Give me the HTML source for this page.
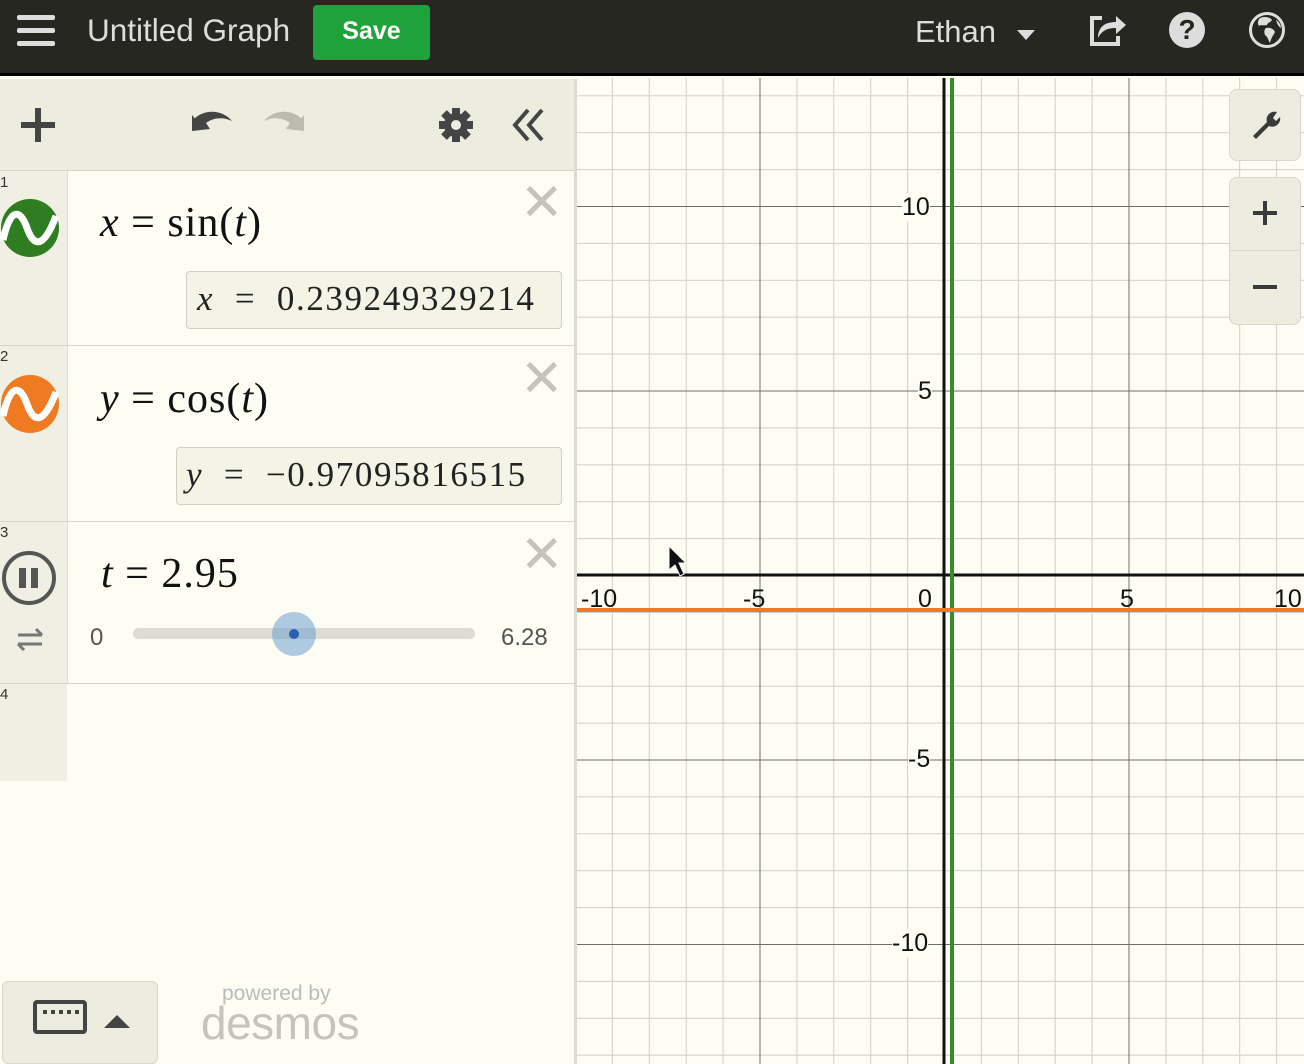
<!DOCTYPE html>
<html><head><meta charset="utf-8"><style>
*{margin:0;padding:0;box-sizing:border-box}
body{width:1304px;height:1064px;overflow:hidden;background:#fdfdf3;font-family:"Liberation Sans",sans-serif;position:relative}
.abs{position:absolute}
.hdr{left:0;top:0;width:1304px;height:76px;background:#272721;border-bottom:3px solid #000}
.math{font-family:"Liberation Serif",serif;color:#111;letter-spacing:1px}
.gut{background:#efefe3}
.x{color:#c4c4bc;font-size:52px;line-height:40px;font-family:"Liberation Sans",sans-serif}
.ans{border:1px solid #cfcfc3;border-radius:4px;background:#f3f3e6;font-family:"Liberation Serif",serif;font-size:35px;color:#222;letter-spacing:1.6px}
.lbl{font-size:25px;color:#111}
</style></head><body>
<svg class="abs" style="left:0;top:0" width="1304" height="1064">
<defs>
<pattern id="mi" patternUnits="userSpaceOnUse" x="944" y="575" width="36.9" height="36.9"><path d="M0 0V36.9M0 0H36.9" stroke="#cfcfc6" stroke-width="2"/></pattern>
<pattern id="ma" patternUnits="userSpaceOnUse" x="944" y="575" width="184.5" height="184.5"><path d="M0 0V184.5M0 0H184.5" stroke="#6e6e68" stroke-width="2"/></pattern>
<clipPath id="c"><rect x="576" y="78" width="728" height="986"/></clipPath>
</defs>
<g clip-path="url(#c)">
<rect x="576" y="78" width="728" height="986" fill="#fdfdf3"/>
<rect x="576" y="78" width="728" height="986" fill="url(#mi)"/>
<rect x="576" y="78" width="728" height="986" fill="url(#ma)"/>
<line x1="576" y1="575" x2="1304" y2="575" stroke="#111" stroke-width="3"/>
<line x1="944" y1="78" x2="944" y2="1064" stroke="#111" stroke-width="3"/>
<line x1="952" y1="78" x2="952" y2="1064" stroke="#3a8a2c" stroke-width="4"/>
<line x1="576" y1="610" x2="1304" y2="610" stroke="#f07a22" stroke-width="4"/>
</g>
<path d="M669 546 L669 570 L675 565 L680 576 L684 574 L679 563 L686 563 Z" fill="#111" stroke="#fff" stroke-width="1"/>
</svg>
<div class="abs lbl" style="left:902px;top:193px;background:#fdfdf3">10</div>
<div class="abs lbl" style="left:918px;top:377px;background:#fdfdf3">5</div>
<div class="abs lbl" style="left:908px;top:745px;background:#fdfdf3">-5</div>
<div class="abs lbl" style="left:892px;top:929px;background:#fdfdf3">-10</div>
<div class="abs lbl" style="left:581px;top:585px">-10</div>
<div class="abs lbl" style="left:743px;top:585px">-5</div>
<div class="abs lbl" style="left:918px;top:585px">0</div>
<div class="abs lbl" style="left:1120px;top:585px">5</div>
<div class="abs lbl" style="left:1274px;top:585px">10</div>
<div class="abs" style="left:1229px;top:89px;width:72px;height:72px;background:#ececdf;border:1px solid #d8d8cc;border-radius:8px"></div>
<svg class="abs" style="left:1247px;top:106px" width="36" height="36" viewBox="0 0 36 36"><path d="M6 30 L20 16 A8 8 0 0 1 30 6 L26 12 L29 15 L33 11 A8 8 0 0 1 22 20 L9 33 Z" fill="#3a3a3a"/></svg>
<div class="abs" style="left:1229px;top:177px;width:72px;height:148px;background:#ececdf;border:1px solid #d8d8cc;border-radius:8px"></div>
<div class="abs" style="left:1230px;top:250px;width:70px;height:1px;background:#d8d8cc"></div>
<div class="abs" style="left:1253px;top:211px;width:24px;height:4px;background:#3a3a3a"></div>
<div class="abs" style="left:1263px;top:201px;width:4px;height:24px;background:#3a3a3a"></div>
<div class="abs" style="left:1253px;top:285px;width:24px;height:4px;background:#3a3a3a"></div>
<div class="abs hdr"></div>
<div class="abs" style="left:17px;top:15px;width:38px;height:5px;background:#ddd;border-radius:2px"></div>
<div class="abs" style="left:17px;top:28px;width:38px;height:5px;background:#ddd;border-radius:2px"></div>
<div class="abs" style="left:17px;top:41px;width:38px;height:5px;background:#ddd;border-radius:2px"></div>
<div class="abs" style="left:87px;top:12px;font-size:31.5px;color:#ddd">Untitled Graph</div>
<div class="abs" style="left:313px;top:5px;width:117px;height:55px;background:#1fa23a;border-radius:4px;color:#fff;font-size:25px;font-weight:bold;text-align:center;line-height:53px">Save</div>
<div class="abs" style="left:915px;top:14px;font-size:31px;color:#ddd">Ethan</div>
<div class="abs" style="left:1017px;top:30px;border-left:9px solid transparent;border-right:9px solid transparent;border-top:10px solid #ddd"></div>
<svg class="abs" style="left:1088px;top:12px" width="40" height="36" viewBox="0 0 40 36"><path d="M14 6 H4 V32 H30 V24" fill="none" stroke="#ddd" stroke-width="4"/><path d="M10 26 C10 14 18 10 28 10 V4 L38 13 L28 22 V16 C20 16 14 18 10 26Z" fill="#ddd"/></svg>
<div class="abs" style="left:1169px;top:12px;width:36px;height:36px;border-radius:50%;background:#ddd;color:#272721;font-weight:bold;font-size:28px;text-align:center;line-height:36px">?</div>
<svg class="abs" style="left:1248px;top:11px" width="38" height="38" viewBox="0 0 38 38"><circle cx="19" cy="19" r="16.5" fill="none" stroke="#ddd" stroke-width="3"/><path d="M12 7 C16 5 22 6 24 9 C22 12 20 11 19 14 C16 15 13 13 11 15 C9 12 10 9 12 7Z M18 17 C22 16 26 18 27 21 C25 25 23 27 22 32 C20 29 20 26 17 24 C16 21 16 19 18 17Z M28 9 C31 11 33 14 33 17 C31 16 29 13 28 9Z" fill="#ddd"/></svg>
<div class="abs" style="left:0;top:79px;width:576px;height:92px;background:#ececdf;border-bottom:1px solid #d5d5ca"></div>
<div class="abs" style="left:574px;top:79px;width:3px;height:985px;background:#dcdcd0"></div>
<div class="abs" style="left:21px;top:122px;width:34px;height:6px;background:#444"></div>
<div class="abs" style="left:35px;top:108px;width:6px;height:34px;background:#444"></div>
<svg class="abs" style="left:188px;top:105px" width="120" height="36" viewBox="0 0 120 36"><path d="M6 14 C16 4 34 4 44 16 C36 12 26 12 18 18 L22 24 L4 26 L4 10 L9 16 Z" fill="#444"/><path d="M114 14 C104 4 86 4 76 16 C84 12 94 12 102 18 L98 24 L116 26 L116 10 L111 16 Z" fill="#bbbbb0"/></svg>
<svg class="abs" style="left:437px;top:106px" width="38" height="38" viewBox="0 0 38 38"><g fill="#444" transform="translate(19 19)"><circle r="12"/><g id="t"><rect x="-4" y="-17" width="8" height="8"/></g><use href="#t" transform="rotate(45)"/><use href="#t" transform="rotate(90)"/><use href="#t" transform="rotate(135)"/><use href="#t" transform="rotate(180)"/><use href="#t" transform="rotate(225)"/><use href="#t" transform="rotate(270)"/><use href="#t" transform="rotate(315)"/></g><circle cx="19" cy="19" r="5" fill="#ececdf"/></svg>
<svg class="abs" style="left:510px;top:106px" width="40" height="38" viewBox="0 0 40 38"><path d="M18 4 L5 19 L18 34 M32 4 L19 19 L32 34" fill="none" stroke="#444" stroke-width="4"/></svg>
<div class="abs gut" style="left:0;top:171px;width:67px;height:610px"></div>
<div class="abs" style="left:67px;top:171px;width:1px;height:513px;background:#dcdcd0"></div>
<div class="abs" style="left:0;top:345px;width:576px;height:1px;background:#d5d5ca"></div>
<div class="abs" style="left:0;top:521px;width:576px;height:1px;background:#d5d5ca"></div>
<div class="abs" style="left:0;top:683px;width:576px;height:1px;background:#d5d5ca"></div>
<div class="abs" style="left:0;top:174px;font-size:15px;color:#333">1</div>
<div class="abs" style="left:0;top:348px;font-size:15px;color:#333">2</div>
<div class="abs" style="left:0;top:524px;font-size:15px;color:#333">3</div>
<div class="abs" style="left:0;top:686px;font-size:15px;color:#333">4</div>
<svg class="abs" style="left:0;top:198px" width="60" height="60" viewBox="0 0 60 60"><circle cx="30" cy="30" r="29" fill="#2e7d20"/><path d="M3 42 C10 10 20 10 27 30 C34 50 44 50 56 18" fill="none" stroke="#fff" stroke-width="7"/></svg>
<svg class="abs" style="left:0;top:374px" width="60" height="60" viewBox="0 0 60 60"><circle cx="30" cy="30" r="29" fill="#f07a22"/><path d="M3 42 C10 10 20 10 27 30 C34 50 44 50 56 18" fill="none" stroke="#fff" stroke-width="7"/></svg>
<div class="abs" style="left:2px;top:551px;width:54px;height:54px;border-radius:50%;border:4px solid #555"></div>
<div class="abs" style="left:19px;top:568px;width:7px;height:20px;background:#555"></div>
<div class="abs" style="left:31px;top:568px;width:7px;height:20px;background:#555"></div>
<svg class="abs" style="left:14px;top:626px" width="32" height="26" viewBox="0 0 32 26"><path d="M4 9 H28 M22 3 L28 9 M28 18 H4 M10 24 L4 18" fill="none" stroke="#777" stroke-width="3"/></svg>
<div class="abs math" style="left:100px;top:199px;font-size:42px"><i>x</i> = sin(<i>t</i>)</div>
<div class="abs x" style="left:520px;top:183px">✕</div>
<div class="abs ans" style="left:186px;top:271px;width:376px;height:58px;line-height:54px;padding-left:10px"><i>x</i> &nbsp;= &nbsp;0.239249329214</div>
<div class="abs math" style="left:100px;top:375px;font-size:42px"><i>y</i> = cos(<i>t</i>)</div>
<div class="abs x" style="left:520px;top:359px">✕</div>
<div class="abs ans" style="left:176px;top:447px;width:386px;height:58px;line-height:54px;padding-left:9px"><i>y</i> &nbsp;= &nbsp;−0.97095816515</div>
<div class="abs math" style="left:101px;top:550px;font-size:42px"><i>t</i> = 2.95</div>
<div class="abs x" style="left:520px;top:535px">✕</div>
<div class="abs" style="left:90px;top:624px;font-size:24px;color:#555">0</div>
<div class="abs" style="left:501px;top:624px;font-size:24px;color:#555">6.28</div>
<div class="abs" style="left:133px;top:628px;width:342px;height:11px;border-radius:6px;background:#dcdcd3"></div>
<div class="abs" style="left:272px;top:612px;width:44px;height:44px;border-radius:50%;background:rgba(110,160,210,.55)"></div>
<div class="abs" style="left:289px;top:629px;width:10px;height:10px;border-radius:50%;background:#2a5fb0"></div>
<div class="abs" style="left:2px;top:981px;width:156px;height:83px;background:#ececdf;border:1px solid #d8d8cc;border-radius:6px"></div>
<div class="abs" style="left:33px;top:1000px;width:54px;height:34px;border:4px solid #444;border-radius:4px;background:repeating-linear-gradient(90deg,#444 0 4px,transparent 4px 8px) 6px 6px/38px 4px no-repeat"></div>
<div class="abs" style="left:104px;top:1015px;border-left:13px solid transparent;border-right:13px solid transparent;border-bottom:13px solid #444"></div>
<div class="abs" style="left:222px;top:982px;font-size:21px;color:#bbb">powered by</div>
<div class="abs" style="left:201px;top:996px;font-size:46px;color:#c4c4bc;letter-spacing:-0.5px">desmos</div>
</body></html>
